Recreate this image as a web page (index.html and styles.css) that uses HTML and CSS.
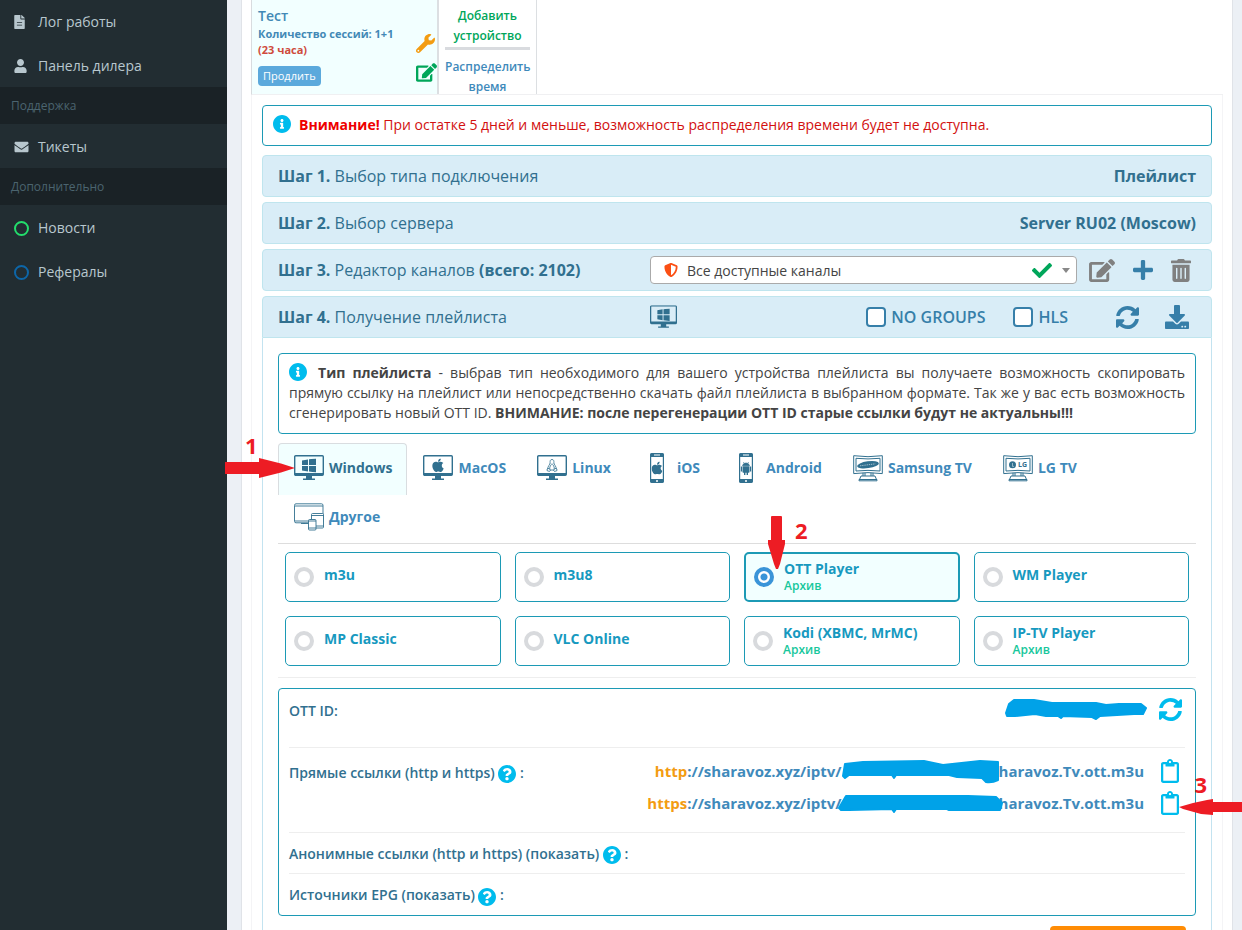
FILE: index.html
```html
<!DOCTYPE html>
<html lang="ru">
<head>
<meta charset="utf-8">
<title>Плейлист</title>
<link rel="stylesheet" href="styles.css">
</head>
<body>
<svg class="defs" aria-hidden="true">
  <symbol id="file" viewBox="0 0 384 512"><path d="M224 136V0H24C10.7 0 0 10.7 0 24v464c0 13.3 10.7 24 24 24h336c13.3 0 24-10.7 24-24V160H248c-13.2 0-24-10.8-24-24zm64 236c0 6.600-5.400 12-12 12H108c-6.600 0-12-5.400-12-12v-8c0-6.600 5.400-12 12-12h168c6.600 0 12 5.400 12 12v8zm0-90c0 6.600-5.400 12-12 12H108c-6.600 0-12-5.400-12-12v-8c0-6.600 5.400-12 12-12h168c6.600 0 12 5.400 12 12v8zm96-160.100v6.100H256V0h6.100c6.400 0 12.500 2.500 17 7l97.900 98c4.500 4.500 7 10.600 7 16.900z"/></symbol>
  <symbol id="user" viewBox="0 0 448 512"><path d="M224 256c70.7 0 128-57.3 128-128S294.7 0 224 0 96 57.3 96 128s57.3 128 128 128zm89.600 32h-16.700c-22.200 10.200-46.900 16-72.900 16s-50.600-5.800-72.900-16h-16.700C60.200 288 0 348.200 0 422.400V464c0 26.500 21.500 48 48 48h352c26.500 0 48-21.500 48-48v-41.600c0-74.200-60.200-134.400-134.400-134.400z"/></symbol>
  <symbol id="envelope" viewBox="0 0 512 512"><path d="M502.3 190.8c3.9-3.1 9.7-.2 9.7 4.7V400c0 26.500-21.500 48-48 48H48c-26.500 0-48-21.500-48-48V195.600c0-5 5.700-7.800 9.700-4.700 22.400 17.400 52.100 39.500 154.100 113.600 21.100 15.400 56.700 47.800 92.200 47.600 35.700.3 72-32.800 92.300-47.600 102-74.100 131.600-96.300 154-113.700zM256 320c23.200.4 56.600-29.200 73.400-41.400 132.700-96.300 142.800-104.700 173.400-128.700 5.800-4.500 9.200-11.500 9.200-18.900v-19c0-26.500-21.500-48-48-48H48c-26.500 0-48 21.500-48 48v19c0 7.400 3.400 14.300 9.200 18.900 30.600 23.900 40.700 32.400 173.400 128.700 16.800 12.200 50.200 41.800 73.400 41.400z"/></symbol>
  <symbol id="edit" viewBox="0 0 576 512"><path d="M402.6 83.2l90.2 90.2c3.8 3.8 3.8 10 0 13.8L274.4 405.6l-92.8 10.3c-12.4 1.4-22.9-9.1-21.5-21.5l10.3-92.8L388.8 83.2c3.8-3.8 10-3.8 13.8 0zm162-22.9l-48.8-48.8c-15.200-15.200-39.900-15.200-55.200 0l-35.400 35.400c-3.800 3.800-3.800 10 0 13.800l90.200 90.200c3.800 3.800 10 3.800 13.800 0l35.400-35.400c15.200-15.300 15.200-40 0-55.200zM384 346.200V448H64V128h229.800c3.200 0 6.200-1.300 8.500-3.500l40-40c7.600-7.600 2.200-20.500-8.500-20.500H48C21.500 64 0 85.500 0 112v352c0 26.500 21.500 48 48 48h352c26.500 0 48-21.500 48-48V306.200c0-10.700-12.900-16-20.500-8.500l-40 40c-2.200 2.300-3.500 5.300-3.500 8.500z"/></symbol>
  <symbol id="wrench" viewBox="0 0 512 512"><path d="M507.73 109.1c-2.24-9.03-13.54-12.09-20.12-5.51l-74.36 74.36-67.88-11.31-11.31-67.88 74.36-74.36c6.62-6.62 3.43-17.9-5.66-20.16-47.38-11.74-99.55.91-136.58 37.93-39.64 39.64-50.55 97.1-34.05 147.2L18.74 402.76c-24.99 24.99-24.99 65.51 0 90.5 24.99 24.99 65.51 24.99 90.5 0l213.21-213.21c50.12 16.71 107.47 5.68 147.37-34.22 37.07-37.07 49.7-89.32 37.91-136.73zM64 472c-13.25 0-24-10.75-24-24 0-13.26 10.75-24 24-24s24 10.74 24 24c0 13.25-10.75 24-24 24z"/></symbol>
  <symbol id="info" viewBox="8 8 496 496"><path d="M256 8C119.043 8 8 119.083 8 256c0 136.997 111.043 248 248 248s248-111.003 248-248C504 119.083 392.957 8 256 8zm0 110c23.196 0 42 18.804 42 42s-18.804 42-42 42-42-18.804-42-42 18.804-42 42-42zm56 254c0 6.627-5.373 12-12 12h-88c-6.627 0-12-5.373-12-12v-24c0-6.627 5.373-12 12-12h12v-64h-12c-6.627 0-12-5.373-12-12v-24c0-6.627 5.373-12 12-12h64c6.627 0 12 5.373 12 12v100h12c6.627 0 12 5.373 12 12v24z"/></symbol>
  <symbol id="question" viewBox="8 8 496 496"><path d="M504 256c0 136.997-111.043 248-248 248S8 392.997 8 256C8 119.083 119.043 8 256 8s248 111.083 248 248zM262.655 90c-54.497 0-89.255 22.957-116.549 63.758-3.536 5.286-2.353 12.415 2.715 16.258l34.699 26.31c5.205 3.947 12.621 3.008 16.665-2.122 17.864-22.658 30.113-35.797 57.303-35.797 20.429 0 45.698 13.148 45.698 32.958 0 14.976-12.363 22.667-32.534 33.976C247.128 238.528 216 254.941 216 296v4c0 6.627 5.373 12 12 12h56c6.627 0 12-5.373 12-12v-1.333c0-28.462 83.186-29.647 83.186-106.667 0-58.002-60.165-102-116.531-102zM256 338c-25.365 0-46 20.635-46 46 0 25.364 20.635 46 46 46s46-20.636 46-46c0-25.365-20.635-46-46-46z"/></symbol>
  <symbol id="check" viewBox="0 64 512 384"><path d="M173.898 439.404l-166.4-166.4c-9.997-9.997-9.997-26.206 0-36.204l36.203-36.204c9.997-9.998 26.207-9.998 36.204 0L192 312.69 432.095 72.596c9.997-9.997 26.207-9.997 36.204 0l36.203 36.204c9.997 9.997 9.997 26.206 0 36.204l-294.4 294.401c-9.998 9.997-26.207 9.997-36.204-.001z"/></symbol>
  <symbol id="shield" viewBox="0 0 512 512"><path d="M466.5 83.7l-192-80a48.15 48.15 0 0 0-36.9 0l-192 80C27.7 91.1 16 108.6 16 128c0 198.5 114.5 335.7 221.5 380.3 11.8 4.9 25.1 4.9 36.9 0C360.1 472.6 496 349.3 496 128c0-19.4-11.7-36.9-29.5-44.3zM256.1 446.3l-.1-381 175.9 73.3c-3.3 151.4-82.1 261.1-175.8 307.7z"/></symbol>
  <symbol id="plus" viewBox="0 32 448 448"><path d="M416 208H272V64c0-17.670-14.330-32-32-32h-32c-17.670 0-32 14.330-32 32v144H32c-17.670 0-32 14.330-32 32v32c0 17.670 14.330 32 32 32h144v144c0 17.670 14.330 32 32 32h32c17.670 0 32-14.330 32-32V304h144c17.670 0 32-14.330 32-32v-32c0-17.670-14.330-32-32-32z"/></symbol>
  <symbol id="trash" viewBox="0 0 448 512"><path d="M32 464a48 48 0 0 0 48 48h288a48 48 0 0 0 48-48V128H32zm272-256a16 16 0 0 1 32 0v224a16 16 0 0 1-32 0zm-96 0a16 16 0 0 1 32 0v224a16 16 0 0 1-32 0zm-96 0a16 16 0 0 1 32 0v224a16 16 0 0 1-32 0zM432 32H312l-9.4-18.700A24 24 0 0 0 281.100 0H166.800a23.720 23.720 0 0 0-21.400 13.300L136 32H16A16 16 0 0 0 0 48v32a16 16 0 0 0 16 16h416a16 16 0 0 0 16-16V48a16 16 0 0 0-16-16z"/></symbol>
  <symbol id="sync" viewBox="8 8 496 496"><path d="M370.72 133.28C339.458 104.008 298.888 87.962 255.848 88c-77.458.068-144.328 53.178-162.791 126.850-1.344 5.363-6.122 9.150-11.651 9.150H24.103c-7.498 0-13.194-6.807-11.807-14.176C33.933 94.924 134.813 8 256 8c66.448 0 126.791 26.136 171.315 68.685L463.030 40.970C478.149 25.851 504 36.559 504 57.941V192c0 13.255-10.745 24-24 24H345.941c-21.382 0-32.090-25.851-16.971-40.971l41.750-41.749zM32 296h134.059c21.382 0 32.090 25.851 16.971 40.971l-41.750 41.750c31.262 29.273 71.835 45.319 114.876 45.280 77.418-.070 144.315-53.144 162.787-126.849 1.344-5.363 6.122-9.150 11.651-9.150h57.304c7.498 0 13.194 6.807 11.807 14.176C478.067 417.076 377.187 504 256 504c-66.448 0-126.791-26.136-171.315-68.685L48.970 471.030C33.851 486.149 8 475.441 8 454.059V320c0-13.255 10.745-24 24-24z"/></symbol>
  <symbol id="download" viewBox="0 0 512 512"><path d="M216 0h80c13.300 0 24 10.700 24 24v168h87.700c17.800 0 26.700 21.500 14.100 34.100L269.700 378.300c-7.500 7.500-19.800 7.500-27.300 0L90.100 226.100c-12.600-12.600-3.700-34.100 14.100-34.100H192V24c0-13.300 10.700-24 24-24zm296 376v112c0 13.300-10.700 24-24 24H24c-13.300 0-24-10.700-24-24V376c0-13.300 10.700-24 24-24h146.700l49 49c20.100 20.100 52.500 20.100 72.600 0l49-49H488c13.300 0 24 10.700 24 24zm-124 88c0-11-9-20-20-20s-20 9-20 20 9 20 20 20 20-9 20-20zm64 0c0-11-9-20-20-20s-20 9-20 20 9 20 20 20 20-9 20-20z"/></symbol>
  <symbol id="clipboard" viewBox="0 0 384 512"><path d="M336 64h-80c0-35.300-28.700-64-64-64s-64 28.700-64 64H48C21.500 64 0 85.500 0 112v352c0 26.500 21.500 48 48 48h288c26.500 0 48-21.500 48-48V112c0-26.500-21.500-48-48-48zM192 40c13.300 0 24 10.700 24 24s-10.700 24-24 24-24-10.700-24-24 10.700-24 24-24zm144 418c0 3.300-2.700 6-6 6H54c-3.300 0-6-2.700-6-6V118c0-3.300 2.700-6 6-6h42v36c0 6.600 5.400 12 12 12h168c6.600 0 12-5.400 12-12v-36h42c3.300 0 6 2.700 6 6z"/></symbol>
  <symbol id="apple" viewBox="0 32 384 448"><path d="M318.7 268.7c-.2-36.7 16.4-64.4 50-84.8-18.8-26.9-47.2-41.700-84.700-44.600-35.500-2.800-74.300 20.700-88.500 20.700-15 0-49.400-19.700-76.400-19.700C63.300 141.200 4 184.800 4 273.500q0 39.300 14.400 81.200c12.800 36.700 59 126.700 107.200 125.200 25.200-.6 43-17.900 75.800-17.900 31.800 0 48.300 17.900 76.400 17.900 48.600-.7 90.400-82.500 102.600-119.300-65.200-30.700-61.700-90-61.700-91.900zm-56.600-164.200c27.300-32.400 24.800-61.900 24-72.500-24.100 1.400-52 16.400-67.900 34.900-17.500 19.800-27.800 44.300-25.600 71.900 26.100 2 49.900-11.400 69.500-34.300z"/></symbol>
  <symbol id="monitor" viewBox="0 0 30 26"><rect x="0.7" y="0.7" width="28.600" height="19.600" rx="1" fill="none" stroke="currentColor" stroke-width="1.400"/><path d="M1 18h28v2H1zM12 20h6v3.500h3V25H9v-1.500h3z"/></symbol>
  <symbol id="win" viewBox="0 0 14 14"><path d="M0 2l6-1v5.500H0zM7 .8L14 0v6.500H7zM0 7.500h6V13l-6-1zM7 7.500h7V14l-7-.9z"/></symbol>
  <symbol id="win-monitor" viewBox="0 0 30 26"><use href="#monitor"/><use href="#win" x="8" y="3.500" width="14" height="14"/></symbol>
  <symbol id="mac-monitor" viewBox="0 0 30 26"><use href="#monitor"/><use href="#apple" x="9" y="3.500" width="12" height="13.500"/></symbol>
  <symbol id="linux-monitor" viewBox="0 0 30 26"><use href="#monitor"/><path d="M15 4.500c-1.800 0-2 1.500-1.900 3.300 0 1.500-2.300 3.600-2.600 6.200M15 4.500c1.800 0 2 1.500 1.900 3.300 0 1.500 2.300 3.600 2.600 6.200M14 8.500l1 1 1-1M14.200 9.500c-1.400 2.200-1.600 3-1.400 4.500M15.800 9.500c1.400 2.200 1.600 3 1.400 4.500M12.500 15h5M10.200 14l1.800-.7 1.500 2-1 1.200-2.500-.9zM19.800 14l-1.800-.7-1.500 2 1 1.200 2.500-.9z" fill="none" stroke="currentColor" stroke-width=".8"/></symbol>
  <symbol id="phone" viewBox="0 0 30 30"><rect x="8.600" y=".6" width="12.800" height="28.800" rx="1.600" fill="#fff" stroke="currentColor" stroke-width="1.200"/><path d="M8 4V2q0-2 2-2h10q2 0 2 2v2zM8 26v2q0 2 2 2h10q2 0 2-2v-2z"/><path d="M12 1.600h6v1h-6zM14 27.300h2v1.400h-2z" fill="#fff"/></symbol>
  <symbol id="ios-phone" viewBox="0 0 30 30"><use href="#phone"/><use href="#apple" x="9.500" y="8.500" width="11" height="13"/></symbol>
  <symbol id="android-phone" viewBox="0 0 30 30"><use href="#phone"/><path d="M11.500 12.700a3.600 3.600 0 0 1 7 0zM12.300 9l1 1.500M17.700 9l-1 1.500" stroke="currentColor" stroke-width=".6"/><path d="M11.500 13.300h7V19q0 .8-.8.800H17v2.200h-1.400v-2.200h-1.200V22H13v-2.200h-.7q-.8 0-.8-.8zM9.800 13.500h1.200v5H9.800zM19 13.500h1.200v5H19z"/></symbol>
  <symbol id="tv" viewBox="0 0 30 28"><path d="M.7 1.700Q15 3.700 29.300 1.700V19.600Q15 17.600.7 19.600zM3 4.300Q15 5.600 27 4.300V17Q15 15.700 3 17zM10 18.800V22M12 18.800V22M18 18.800V22M20 18.800V22M8 22h14l1.500 3.500H6.500zM6 25.500h18v1.300H6z" fill="none" stroke="currentColor"/></symbol>
  <symbol id="samsung-tv" viewBox="0 0 30 28"><use href="#tv"/><ellipse cx="15" cy="10.700" rx="11" ry="3.400" transform="rotate(-8 15 10.700)"/><path d="M7 11.800l15.500-2" stroke="#fff" stroke-width="1" stroke-dasharray="1.400 .8" opacity=".55"/></symbol>
  <symbol id="lg-tv" viewBox="0 0 30 28"><use href="#tv"/><circle cx="9.500" cy="10.700" r="3.500"/><path d="M9.500 9v3.400h1.500" fill="none" stroke="#fff" stroke-width=".5"/><text x="15" y="13.300" font-family="Open Sans, sans-serif" font-weight="700" font-size="7">LG</text></symbol>
  <symbol id="devices" viewBox="0 0 30 28"><g fill="#fff" stroke="currentColor" stroke-width=".9"><rect x=".5" y=".8" width="28.500" height="19" rx="1.500"/><path d="M1 3h28M1 18h28M7 20.500h8M10 20v1"/><rect x="17.500" y="10.500" width="12" height="14.500" rx="1"/><path d="M17.500 12.500h12M17.500 23h12"/><rect x="14.500" y="16.500" width="7.500" height="10.500" rx="1"/><path d="M14.500 18h7.500M14.500 25h7.500"/></g></symbol>
</svg>

<aside class="sidebar">
  <nav class="menu" aria-label="Меню">
    <a class="menu-item" href="#log"><span class="menu-icon"><svg width="11" height="14"><use href="#file"/></svg></span>Лог работы</a>
    <a class="menu-item" href="#dealer"><span class="menu-icon"><svg width="13" height="14"><use href="#user"/></svg></span>Панель дилера</a>
    <h2 class="menu-head">Поддержка</h2>
    <a class="menu-item" href="#tickets"><span class="menu-icon"><svg width="15" height="14"><use href="#envelope"/></svg></span>Тикеты</a>
    <h2 class="menu-head">Дополнительно</h2>
    <a class="menu-item" href="#news"><span class="menu-icon"><i class="ring ring-green"></i></span>Новости</a>
    <a class="menu-item" href="#referrals"><span class="menu-icon"><i class="ring ring-blue"></i></span>Рефералы</a>
  </nav>
</aside>

<main class="main">
  <div class="box">
    <section class="devices">
      <div class="device">
        <div class="device-info">
          <div class="device-name">Тест</div>
          <div class="device-meta">Количество сессий: 1+1</div>
          <div class="device-meta device-time">(23 часа)</div>
          <button class="renew" type="button">Продлить</button>
        </div>
        <div class="device-tools">
          <button class="icon-btn orange" type="button" aria-label="Настройки"><svg width="19" height="19"><use href="#wrench"/></svg></button>
          <button class="icon-btn green" type="button" aria-label="Изменить"><svg width="21" height="19"><use href="#edit"/></svg></button>
        </div>
      </div>
      <div class="device-add">
        <a class="add-link green" href="#add">Добавить устройство</a>
        <a class="add-link spread" href="#spread">Распределить время</a>
      </div>
    </section>

    <div class="content">
      <div class="alert warning"><svg class="round" width="18" height="18"><use href="#info"/></svg><b>Внимание!</b> При остатке 5 дней и меньше, возможность распределения времени будет не доступна.</div>

      <section class="step"><h3 class="step-title"><b>Шаг 1.</b> Выбор типа подключения</h3><div class="step-side"><b>Плейлист</b></div></section>
      <section class="step"><h3 class="step-title"><b>Шаг 2.</b> Выбор сервера</h3><div class="step-side"><b>Server RU02 (Moscow)</b></div></section>
      <section class="step">
        <h3 class="step-title"><b>Шаг 3.</b> Редактор каналов <b>(всего: 2102)</b></h3>
        <div class="step-side">
          <div class="picker">
            <svg class="shield" width="14" height="14"><use href="#shield"/></svg>
            <select class="picker-select" aria-label="Каналы"><option>Все доступные каналы</option></select>
            <svg class="green" width="20" height="15"><use href="#check"/></svg>
            <svg class="caret" width="8" height="5" viewBox="0 0 8 5"><path d="M0 0h8L4 5z"/></svg>
          </div>
          <div class="channel-tools">
            <button class="icon-btn gray" type="button" aria-label="Редактировать"><svg width="26" height="23"><use href="#edit"/></svg></button>
            <button class="icon-btn blue" type="button" aria-label="Добавить"><svg width="20" height="20"><use href="#plus"/></svg></button>
            <button class="icon-btn gray" type="button" aria-label="Удалить"><svg width="20" height="23"><use href="#trash"/></svg></button>
          </div>
        </div>
      </section>
      <section class="step step-open">
        <h3 class="step-title"><b>Шаг 4.</b> Получение плейлиста</h3>
        <div class="step-side">
          <svg class="dark os-mark" width="27" height="24"><use href="#win-monitor"/></svg>
          <label class="tick"><input type="checkbox">NO GROUPS</label>
          <label class="tick tick-hls"><input type="checkbox">HLS</label>
          <div class="playlist-tools">
            <button class="icon-btn blue" type="button" aria-label="Обновить"><svg width="23" height="23"><use href="#sync"/></svg></button>
            <button class="icon-btn blue" type="button" aria-label="Скачать"><svg width="24" height="24"><use href="#download"/></svg></button>
          </div>
        </div>
      </section>

      <div class="step-body">
        <p class="alert note"><svg class="round" width="18" height="18"><use href="#info"/></svg> <b>Тип плейлиста</b> - выбрав тип необходимого для вашего устройства плейлиста вы получаете возможность скопировать прямую ссылку на плейлист или непосредственно скачать файл плейлиста в выбранном формате. Так же у вас есть возможность сгенерировать новый OTT ID. <b>ВНИМАНИЕ: после перегенерации OTT ID старые ссылки будут не актуальны!!!</b></p>

        <nav class="tabs" aria-label="Устройство">
          <a class="tab tab-active" href="#windows"><svg width="30" height="26"><use href="#win-monitor"/></svg>Windows
            <span class="mark mark-1">1<svg width="70" height="20" viewBox="0 0 70 20"><path d="M0 4h34V0L56 5.500 70 10 56 14.500 34 20V16H0z"/></svg></span></a>
          <a class="tab" href="#macos"><svg width="30" height="26"><use href="#mac-monitor"/></svg>MacOS</a>
          <a class="tab" href="#linux"><svg width="30" height="26"><use href="#linux-monitor"/></svg>Linux</a>
          <a class="tab" href="#ios"><svg width="30" height="30"><use href="#ios-phone"/></svg>iOS</a>
          <a class="tab" href="#android"><svg width="30" height="30"><use href="#android-phone"/></svg>Android</a>
          <a class="tab" href="#samsung"><svg width="30" height="28"><use href="#samsung-tv"/></svg>Samsung TV</a>
          <a class="tab" href="#lg"><svg width="30" height="28"><use href="#lg-tv"/></svg>LG TV</a>
          <a class="tab" href="#other"><svg width="30" height="28"><use href="#devices"/></svg>Другое</a>
        </nav>

        <div class="formats">
          <label class="format"><input type="radio" name="format"><span><b>m3u</b></span></label>
          <label class="format"><input type="radio" name="format"><span><b>m3u8</b></span></label>
          <label class="format format-on"><input type="radio" name="format" checked><span><b>OTT Player</b><small>Архив</small></span>
            <span class="mark mark-2"><svg width="18" height="54" viewBox="0 0 18 54"><path d="M3 1q0-1 1-1h9q1 0 1 1v23h3v4l-5 20-2 5H8l-2-5L0 28v-4h3z"/></svg>2</span></label>
          <label class="format"><input type="radio" name="format"><span><b>WM Player</b></span></label>
          <label class="format"><input type="radio" name="format"><span><b>MP Classic</b></span></label>
          <label class="format"><input type="radio" name="format"><span><b>VLC Online</b></span></label>
          <label class="format"><input type="radio" name="format"><span><b>Kodi (XBMC, MrMC)</b><small>Архив</small></span></label>
          <label class="format"><input type="radio" name="format"><span><b>IP-TV Player</b><small>Архив</small></span></label>
        </div>

        <div class="links">
          <div class="link-row row-id">
            <span class="link-label">OTT ID:</span>
            <span class="link-value"><svg class="scribble" width="142" height="22" viewBox="0 0 142 22"><path d="M1 15L4 6 9 2H29L47 5H91L101 7 114 6H136L141 10 138 16H129L95 18 91 21 87 19 58 18 56 20 53 18H41L30 16 10 18H2z"/></svg>
            <button class="icon-btn cyan" type="button" aria-label="Новый OTT ID"><svg width="23" height="23"><use href="#sync"/></svg></button></span>
          </div>
          <div class="link-row row-direct">
            <span class="link-label">Прямые ссылки (http и https) <svg class="round" width="18" height="18"><use href="#question"/></svg> :</span>
            <div class="urls">
              <span class="link-value"><a class="url" href="#http"><em>http</em>://sharavoz.xyz/iptv/<span class="hidden-part"><svg class="scribble" width="158" height="24" viewBox="0 0 158 24"><path d="M3 4L21 2 82 1 101 5 138 1 156 2 156 20Q150 23 144 22L140 18 115 17 107 15H54L52 18 50 15H7L3 18 1 16z"/></svg></span>haravoz.Tv.ott.m3u</a>
              <button class="icon-btn cyan" type="button" aria-label="Копировать http"><svg width="18" height="24"><use href="#clipboard"/></svg></button></span>
              <span class="link-value"><a class="url" href="#https"><em>https</em>://sharavoz.xyz/iptv/<span class="hidden-part"><svg class="scribble" width="166" height="18" viewBox="4 0 166 18"><path d="M12 1H134L162 2 168 8 166 15H115L113 14H62L60 17 58 14 15 15H7L5 13z"/></svg></span>haravoz.Tv.ott.m3u</a>
              <button class="icon-btn cyan" type="button" aria-label="Копировать https"><svg width="18" height="24"><use href="#clipboard"/></svg></button>
              <span class="mark mark-3">3<svg width="64" height="16" viewBox="0 0 64 16"><path d="M0 8L14 4 28 1 34 0V3H64V13H34V16L22 15 4 10z"/></svg></span></span>
            </div>
          </div>
          <div class="link-row"><span class="link-label">Анонимные ссылки (http и https) (показать) <svg class="round" width="18" height="18"><use href="#question"/></svg> :</span></div>
          <div class="link-row"><span class="link-label">Источники EPG (показать) <svg class="round" width="18" height="18"><use href="#question"/></svg> :</span></div>
        </div>
        <div class="actions"><button class="next" type="button" aria-label="Далее"></button></div>
      </div>
    </div>
  </div>
</main>
</body>
</html>
```
FILE: styles.css
```css
* { box-sizing: border-box; }
body {
  margin: 0;
  display: flex;
  height: 100vh;
  overflow: hidden;
  font: 14px/20px "Open Sans", "Noto Sans", sans-serif;
  color: #333;
  background: #ecf0f5;
}
a { color: #3f8abb; text-decoration: none; }
b { font-weight: 700; }
svg { fill: currentColor; flex: none; }
.defs { position: absolute; width: 0; height: 0; }
.green { color: #00a65a; }
.orange { color: #f39c12; }
.gray { color: #808080; }
.blue { color: #367fa9; }
.cyan { color: #00bced; }
.dark { color: #31708f; }
.icon-btn { display: flex; padding: 0; border: 0; background: none; cursor: pointer; }

/* Sidebar */
.sidebar { flex: 0 0 227px; background: #222d32; }
.menu { margin-top: -1px; }
.menu-item { display: flex; align-items: center; height: 44px; padding: 2px 0 0 14px; color: #b8c7ce; }
.menu-icon { display: flex; width: 24px; }
.menu-head { margin: 0; padding: 9px 11px; height: 37px; font-size: 12px; line-height: 19px; font-weight: 400; color: #4b646f; background: #1a2226; }
.ring { width: 15px; height: 15px; border: 2px solid; border-radius: 50%; }
.ring-green { border-color: #23dd6c; }
.ring-blue { border-color: #0d66a8; }

/* Page box */
.main { flex: 1; min-width: 0; padding: 0 9px 0 14px; }
.box { min-height: 100vh; padding: 0 9px; background: #fff; border: solid #e0e3e8; border-width: 0 1px; }

/* Devices */
.devices { display: flex; height: 95px; border-bottom: 1px solid #f0f0f2; border-left: 1px solid #d8dcdf; }
.device { display: flex; justify-content: space-between; width: 187px; padding: 5px 0 0 6px; background: #f2ffff; border-right: 2px solid #dcdfe2; }
.device-name { line-height: 21px; font-weight: 600; color: #4289b6; }
.device-meta { font-size: 11px; line-height: 16px; font-weight: 700; color: #4289b6; white-space: nowrap; }
.device-time { color: #cf4b3c; }
.renew { height: 20px; margin-top: 8px; padding: 0 5px; border: 0; border-radius: 4px; font: 11px/20px "Open Sans", sans-serif; color: #fff; background: #5ba9dc; }
.device-tools { display: flex; flex-direction: column; gap: 10px; padding-top: 29px; }
.device-add { width: 98px; padding: 6px 6px 0; text-align: center; border-right: 1px solid #dcdfe2; }
.add-link { display: block; font-size: 12px; font-weight: 600; }
.add-link.green { color: #00a65a; }
.spread { margin-top: 1px; padding-top: 7px; border-top: 3px solid #d9dbdf; }

/* Messages */
.content { padding: 10px; border: solid #f4f4f6; border-width: 0 1px; }
.alert { margin: 0; padding: 9px 10px 10px; border: 1px solid #1c9ab5; border-radius: 4px; }
.alert .round { vertical-align: top; }
.round { color: #00bced; vertical-align: middle; }
.warning { margin-bottom: 9px; color: #d2100f; }
.warning b { color: #ee0000; }
.warning .round { margin-right: 8px; }
.note { text-align: justify; color: #444; }
.note .round { margin-right: 4px; }

/* Steps */
.step { display: grid; grid-template-columns: 372fr 546fr; align-items: center; height: 42px; margin-bottom: 5px; padding: 0 15px; color: #31708f; background: #d9edf7; border: 1px solid #bfe5ee; border-radius: 4px; }
.step-open { margin-bottom: 0; border-radius: 4px 4px 0 0; }
.step-title { margin: 0; font-size: 16px; font-weight: 400; white-space: nowrap; }
.step-side { display: flex; align-items: center; font-size: 16px; }
.step-side > b { margin-left: auto; }
.picker { display: flex; align-items: center; flex: 1; height: 28px; padding: 0 6px 0 13px; background: #fff; border: 1px solid #aaa; border-radius: 4px; }
.shield { color: #fb4f14; }
.picker-select { flex: 1; min-width: 0; margin: 2px 8px 0 9px; padding: 0; appearance: none; border: 0; font: 14px/20px "Open Sans", sans-serif; color: #444; background: none; }
.caret { margin-left: 10px; color: #888; }
.channel-tools { display: flex; align-items: center; gap: 18px; margin: 0 5px 0 12px; }
.os-mark { margin-right: auto; }
.tick { display: flex; align-items: center; gap: 5px; font-size: 16px; font-weight: 600; color: #367fa9; }
.tick-hls { margin-left: 28px; }
.tick input { appearance: none; width: 20px; height: 20px; margin: 0; border: 2px solid #367fa9; border-radius: 4px; background: #fff; }
.playlist-tools { display: flex; align-items: center; gap: 26px; margin: 0 7px 0 48px; }
.step-body { padding: 15px; border: solid #c3e3f0; border-width: 0 1px; }

/* Tabs */
.tabs { display: flex; flex-wrap: wrap; margin-top: 9px; padding-bottom: 2px; border-bottom: 1px solid #ddd; }
.tab { position: relative; display: flex; align-items: center; gap: 5px; height: 52px; margin-bottom: -3px; padding: 0 14px 3px 15px; border: 1px solid transparent; border-bottom: 0; border-radius: 4px 4px 0 0; font-weight: 700; }
.tab svg { color: #31708f; }
.tab-active { color: #31708f; background: #f2ffff; border-color: #d9dde0; }

/* Playlist formats */
.formats { display: grid; grid-template-columns: repeat(4, 1fr); gap: 14px; padding: 8px 7px 11px; border-bottom: 1px solid #eee; }
.format { position: relative; display: flex; align-items: center; gap: 10px; height: 50px; padding: 0 8px; border: 1px solid #1c9ab5; border-radius: 5px; color: #1799bf; }
.format-on { border-width: 2px; background: #f2ffff; }
.format b, .format small { display: block; }
.format b { line-height: 18px; }
.format b:only-child { padding-bottom: 4px; }
.format small { font-size: 12px; line-height: 16px; font-weight: 600; color: #18c79c; }
.format input { appearance: none; width: 20px; height: 20px; margin: 0; border: 4px solid #d8dadd; border-radius: 50%; background: #fff; }
.format input:checked { border-color: #3a94d8; background: radial-gradient(circle, #3a94d8 3px, #fff 4px); }

/* Links */
.links { margin-top: 10px; padding: 0 10px; border: 1px solid #1c9ab5; border-radius: 4px; font-weight: 600; color: #31708f; }
.link-row { display: flex; justify-content: space-between; padding: 11px 0 9px; border-bottom: 1px solid #eee; }
.link-row:last-child { border-bottom: 0; }
.row-id { padding: 12px 0 26px; }
.row-id .link-value { align-items: flex-start; gap: 12px; height: 20px; margin-top: -3px; padding-right: 3px; }
.row-direct { padding: 15px 0 17px; }
.urls { display: flex; flex-direction: column; gap: 8px; margin-top: -4px; }
.link-value { position: relative; display: flex; align-items: center; justify-content: flex-end; gap: 17px; padding-right: 6px; height: 24px; }
.url { font-size: 15px; font-weight: 700; }
.url em { font-style: normal; color: #f39c12; }
.scribble { color: #00a2e8; stroke: currentColor; stroke-width: 2; stroke-linejoin: round; }
.hidden-part { position: relative; display: inline-block; width: 157px; height: 10px; }
.hidden-part .scribble { position: absolute; left: 0; top: -7px; }
.link-value:last-child .hidden-part .scribble { left: -4px; top: -4px; }
.actions { display: flex; justify-content: flex-end; padding: 10px 10px 0 0; }
.next { width: 136px; height: 34px; border: 0; border-radius: 4px; background: #ff8c05; }

/* Pointers laid over the page */
.mark { position: absolute; z-index: 1; font: 700 22px/20px "Open Sans", sans-serif; color: #ed1c24; }
.mark svg { position: absolute; color: #ed1c24; }
.mark-1 { left: -34px; top: -9px; }
.mark-1 svg { left: -20px; top: 23px; }
.mark-2 { left: 49px; top: -34px; }
.mark-2 svg { right: 22px; top: -4px; }
.mark-3 { right: -22px; top: -17px; }
.mark-3 svg { left: -15px; top: 25px; }
```
